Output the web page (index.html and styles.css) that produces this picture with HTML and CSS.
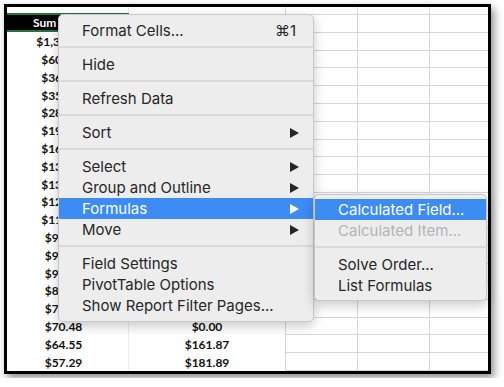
FILE: index.html
```html
<!DOCTYPE html>
<html lang="en">
<head>
    <meta charset="UTF-8">
    <title>PivotTable Context Menu</title>
    <link rel="stylesheet" href="styles.css">
</head>
<body>
    <div class="sheet">
        <div class="grid" id="grid"></div>

        <div class="menu main-menu">
            <div class="item">Format Cells...<span class="key">&#8984;1</span></div>
            <div class="sep"></div>
            <div class="item">Hide</div>
            <div class="sep"></div>
            <div class="item">Refresh Data</div>
            <div class="sep"></div>
            <div class="item">Sort<span class="arrow"></span></div>
            <div class="sep"></div>
            <div class="item">Select<span class="arrow"></span></div>
            <div class="item">Group and Outline<span class="arrow"></span></div>
            <div class="item active">Formulas<span class="arrow"></span></div>
            <div class="item">Move<span class="arrow"></span></div>
            <div class="sep"></div>
            <div class="item">Field Settings</div>
            <div class="item">PivotTable Options</div>
            <div class="item">Show Report Filter Pages...</div>
        </div>

        <div class="menu sub-menu">
            <div class="item active">Calculated Field...</div>
            <div class="item disabled">Calculated Item...</div>
            <div class="sep"></div>
            <div class="item">Solve Order...</div>
            <div class="item">List Formulas</div>
        </div>
    </div>

    <script>
        const sums = ['$1,345.20', '$605.18', '$360.42', '$355.71', '$285.90', '$195.33', '$168.02',
            '$135.60', '$132.47', '$125.88', '$117.39', '$98.45', '$96.12', '$92.70', '$85.63',
            '$74.91', '$70.48', '$64.55', '$57.29'];
        // only the last rows of the second column show below the menu
        const other = {16: '$0.00', 17: '$161.87', 18: '$181.89'};

        function row(a, b, headCell) {
            return `
                <div class="cell a${headCell ? ' head' : ''}">${a}</div>
                <div class="cell b">${b}</div>
                <div class="cell c"></div>
                <div class="cell d"></div>
                <div class="cell e"></div>`;
        }

        let output = row('', '', false);
        output += row('Sum', '', true);
        sums.forEach((value, index) => {
            output += row(value, other[index] || '', false);
        });
        document.getElementById('grid').innerHTML = output;
    </script>
</body>
</html>
```

FILE: styles.css
```css
* {
    box-sizing: border-box;
}
body {
    margin: 0;
    background: #fff;
}
.sheet {
    position: relative;
    margin: 4px;
    width: 487px;
    height: 370px;
    border: 3px solid #000;
    background: #fff;
    box-shadow: 3px 4px 8px rgba(0, 0, 0, 0.45);
}
.grid {
    display: grid;
    grid-template-columns: 122px 157px 72px 72px 1fr;
    grid-template-rows: 8px repeat(20, 17.8px);
    height: 100%;
    overflow: hidden;
    font-family: Lato, sans-serif;
    font-weight: 700;
    font-size: 12px;
    color: #111;
}
.cell {
    display: flex;
    align-items: center;
    justify-content: center;
}
.a {
    padding-right: 8px;
    border-right: 1px solid #ebebeb;
}
.b {
    border-right: 1px solid #d6d6d6;
}
.c, .d {
    border-right: 1px solid #d6d6d6;
    border-bottom: 1px solid #d6d6d6;
}
.e {
    border-bottom: 1px solid #d6d6d6;
}
.head {
    justify-content: flex-start;
    padding-left: 26px;
    background: #000;
    color: #fff;
    border-bottom: 2px solid #217346;
    box-shadow: 0 -2px 0 #217346;
    margin-bottom: 1px;
}
.menu {
    position: absolute;
    background: #ededed;
    border: 1px solid #c8c8c8;
    border-radius: 5px;
    box-shadow: 0 4px 12px rgba(0, 0, 0, 0.22);
    font-family: Inter, "DejaVu Sans", sans-serif;
    font-size: 15px;
    color: #262626;
}
.main-menu {
    left: 51px;
    top: 7px;
    width: 256px;
    padding: 5px 0;
}
.sub-menu {
    left: 307px;
    top: 187px;
    width: 173px;
    padding: 4px 0;
}
.item {
    display: flex;
    align-items: center;
    height: 21px;
    padding: 0 14px 0 23px;
    white-space: nowrap;
}
.key {
    margin-left: auto;
    margin-right: 3px;
}
.arrow {
    margin-left: auto;
    width: 0;
    height: 0;
    border-left: 9px solid #262626;
    border-top: 5px solid transparent;
    border-bottom: 5px solid transparent;
}
.item.active {
    background: #3d8cf4;
    color: #fff;
}
.item.active .arrow {
    border-left-color: #fff;
}
.item.disabled {
    color: #b4b4b4;
}
.sep {
    height: 2px;
    margin: 5px 0 6px;
    background: #dadada;
}
```
